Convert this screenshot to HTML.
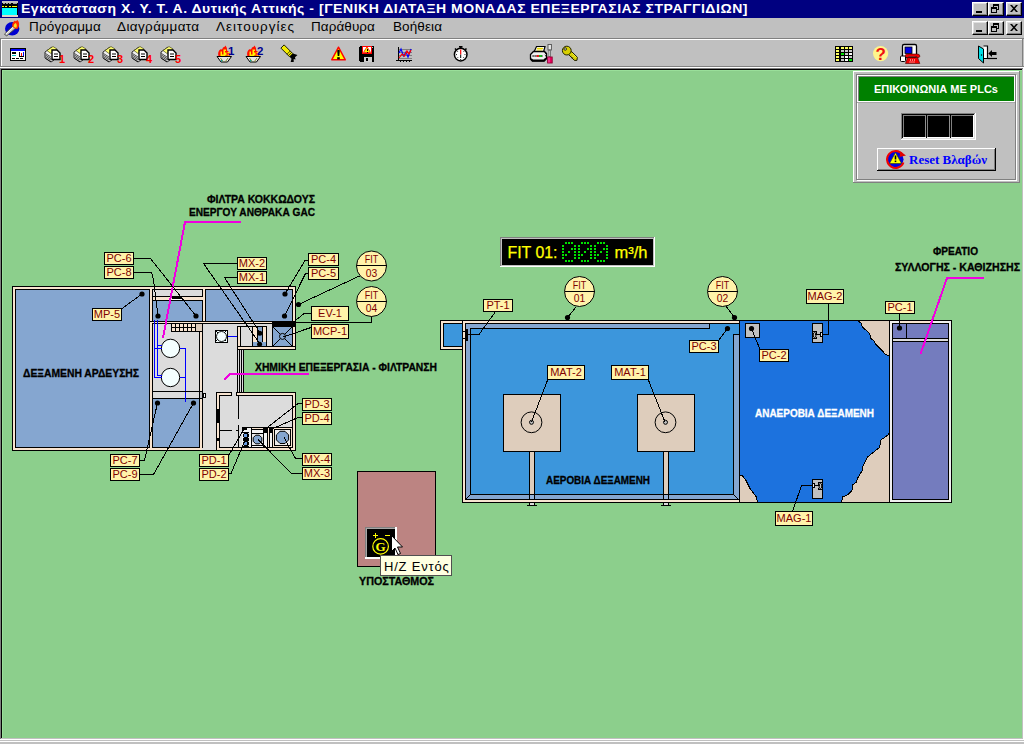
<!DOCTYPE html>
<html lang="el"><head><meta charset="utf-8"><title>Εγκατάσταση Χ. Υ. Τ. Α. Δυτικής Αττικής</title>
<style>
html,body{margin:0;padding:0}
body{width:1024px;height:744px;overflow:hidden;background:#C0C0C0;position:relative;font-family:"Liberation Sans",sans-serif;font-size:13px;color:#000}
.abs{position:absolute}
#title{left:0;top:0;width:1024px;height:18px;background:#000080}
#title .t{left:21px;top:1px;color:#fff;font-weight:bold;font-size:13px;line-height:16px;white-space:nowrap;letter-spacing:0.5px;transform:scaleX(1.076);transform-origin:0 0}
.menu{top:18px;font-size:13.5px;line-height:18px;white-space:nowrap;letter-spacing:0.45px}
.wb{width:16px;height:14px;background:#C0C0C0;box-sizing:border-box;border:1px solid;border-color:#fff #000 #000 #fff;box-shadow:inset -1px -1px 0 #808080,inset 1px 1px 0 #dfdfdf}
svg{position:absolute;left:0;top:0}
svg text{font-family:"Liberation Sans",sans-serif}
#tip{left:380px;top:555px;width:70px;height:19px;background:#FFFFE1;border:1px solid #505050;font-size:13px;line-height:21px;white-space:nowrap}
</style></head><body>
<div id="title" class="abs"><div class="t abs">Εγκατάσταση Χ. Υ. Τ. Α. Δυτικής Αττικής - [ΓΕΝΙΚΗ ΔΙΑΤΑΞΗ ΜΟΝΑΔΑΣ ΕΠΕΞΕΡΓΑΣΙΑΣ ΣΤΡΑΓΓΙΔΙΩΝ]</div></div>
<div class="abs wb" style="left:972px;top:2px"></div><div class="abs wb" style="left:988px;top:2px"></div><div class="abs wb" style="left:1006px;top:2px"></div><div class="abs wb" style="left:972px;top:21px"></div><div class="abs wb" style="left:988px;top:21px"></div><div class="abs wb" style="left:1006px;top:21px"></div>
<div class="abs menu" style="left:29px;letter-spacing:0.16px">Πρόγραμμα</div><div class="abs menu" style="left:117px;letter-spacing:0.38px">Διαγράμματα</div><div class="abs menu" style="left:216px;letter-spacing:1.0px">Λειτουργίες</div><div class="abs menu" style="left:311px;letter-spacing:0.07px">Παράθυρα</div><div class="abs menu" style="left:393px;letter-spacing:0.11px">Βοήθεια</div>
<div class="abs" style="left:0;top:38px;width:1024px;height:1px;background:#808080"></div><div class="abs" style="left:1px;top:39px;width:1022px;height:1px;background:#fff"></div><div class="abs" style="left:1px;top:39px;width:1px;height:27px;background:#fff"></div><div class="abs" style="left:0;top:38px;width:1px;height:29px;background:#808080"></div><div class="abs" style="left:0;top:66px;width:1024px;height:1px;background:#808080"></div><div class="abs" style="left:0;top:67px;width:1024px;height:1px;background:#fff"></div><div class="abs" style="left:1022px;top:39px;width:1px;height:28px;background:#808080"></div><div class="abs" style="left:0;top:68px;width:1024px;height:671px;background:#808080"></div><div class="abs" style="left:1px;top:69px;width:1022px;height:670px;background:#000"></div><div class="abs" style="left:2px;top:70px;width:1020px;height:668px;background:#8CCF8C"></div><div class="abs" style="left:2px;top:70px;width:1020px;height:1px;background:#9ADF9A"></div><div class="abs" style="left:2px;top:70px;width:1px;height:668px;background:#9ADF9A"></div><div class="abs" style="left:1022px;top:69px;width:1px;height:670px;background:#C0C0C0"></div><div class="abs" style="left:1023px;top:68px;width:1px;height:672px;background:#fff"></div><div class="abs" style="left:1px;top:738px;width:1022px;height:1px;background:#C0C0C0"></div><div class="abs" style="left:0;top:739px;width:1024px;height:1px;background:#fff"></div><div class="abs" style="left:0;top:740px;width:1024px;height:1px;background:#C0C0C0"></div><div class="abs" style="left:0;top:741px;width:1024px;height:1px;background:#fff"></div><div class="abs" style="left:0;top:742px;width:1024px;height:2px;background:#C0C0C0"></div>
<svg width="1024" height="744" viewBox="0 0 1024 744" shape-rendering="crispEdges">
<g id="ticon"><rect x="2" y="1" width="16" height="16" fill="#000" /><rect x="2" y="1" width="16" height="2" fill="#C0C0C0" /><rect x="3" y="3" width="2" height="1" fill="#A0A0A0" /><rect x="6" y="3" width="2" height="1" fill="#A0A0A0" /><rect x="9" y="3" width="2" height="1" fill="#A0A0A0" /><rect x="13" y="3" width="2" height="1" fill="#A0A0A0" /><rect x="15" y="3" width="2" height="1" fill="#A0A0A0" /><rect x="2" y="6" width="2" height="1" fill="#FFFF00" /><rect x="5" y="6" width="2" height="1" fill="#FFFF00" /><rect x="9" y="6" width="2" height="1" fill="#FFFF00" /><rect x="12" y="6" width="5" height="1" fill="#FFFF00" /><rect x="2" y="8" width="15" height="7" fill="#00FFFF" /><rect x="2" y="15" width="16" height="2" fill="#E0D4C8" /></g>
<g id="micon" shape-rendering="auto"><ellipse cx="12.2" cy="28.8" rx="7.2" ry="6.8" fill="#0000D0"/><path d="M4.5 34 L13.5 25.5 L16 28 L6.5 36 Z" fill="#C8C8C8" stroke="#404040" stroke-width="0.9"/><path d="M6 34 L14 26.5" stroke="#fff" stroke-width="0.9"/><path d="M12.3 26.5 Q11.5 22.5 15 20.5 Q15.5 22 17.5 20 Q20.5 23.5 18 28.5 Q15 30 12.3 26.5 Z" fill="#FF2800"/><path d="M13.5 26.5 Q13.5 24 15.5 23 Q17.5 24.5 16.5 27.5 Q14.5 28 13.5 26.5 Z" fill="#FFE020"/></g>
<rect x="976" y="11" width="6" height="2" fill="#000" /><rect x="993.5" y="4.5" width="5" height="5" fill="none" stroke="#000" /><rect x="993" y="4" width="6" height="2" fill="#000" /><rect x="991.5" y="7.5" width="5" height="5" fill="#C0C0C0" stroke="#000" /><rect x="991" y="7" width="6" height="2" fill="#000" /><path d="M1010 5 h2 l6 7 h-2 Z M1016 5 h2 l-6 7 h-2 Z" fill="#000" shape-rendering="auto"/><rect x="976" y="30" width="6" height="2" fill="#000" /><rect x="993.5" y="23.5" width="5" height="5" fill="none" stroke="#000" /><rect x="993" y="23" width="6" height="2" fill="#000" /><rect x="991.5" y="26.5" width="5" height="5" fill="#C0C0C0" stroke="#000" /><rect x="991" y="26" width="6" height="2" fill="#000" /><path d="M1010 24 h2 l6 7 h-2 Z M1016 24 h2 l-6 7 h-2 Z" fill="#000" shape-rendering="auto"/>
<g><rect x="10.5" y="48.5" width="15" height="12" fill="#fff" stroke="#000" /><rect x="11" y="49" width="14" height="2" fill="#0000FF" /><rect x="12" y="52" width="4" height="2" fill="#000" /><rect x="12" y="55" width="4" height="1" fill="#00C0C0" /><rect x="19" y="52" width="1" height="4" fill="#000" /><rect x="21" y="53" width="1" height="3" fill="#FF0000" /><rect x="23" y="52" width="1" height="4" fill="#0000FF" /><rect x="19" y="56" width="5" height="1" fill="#000" /><rect x="12" y="58" width="3" height="1" fill="#000" /><rect x="16" y="58" width="3" height="1" fill="#000" /><rect x="20" y="58" width="3" height="1" fill="#000" /></g>
<g shape-rendering="auto"><path d="M45 52 L52 47 L54 49 L54 60 L51 62 L45 58 Z" fill="#f0f0f0" stroke="#000" stroke-width="0.8"/><path d="M45.5 53.5 L51 57.0" stroke="#000" stroke-width="0.7"/><path d="M45.5 55.1 L51 58.6" stroke="#000" stroke-width="0.7"/><path d="M45.5 56.7 L51 60.2" stroke="#000" stroke-width="0.7"/><path d="M45.5 58.3 L51 61.8" stroke="#000" stroke-width="0.7"/><path d="M47 50.5 L53 46.5 L57 49 L51 53.5 Z" fill="#FFFF70" stroke="#303000" stroke-width="0.6"/><path d="M52 50 L57 50 L60 53 L60 59.5 L52 59.5 Z" fill="#fff" stroke="#000" stroke-width="1.4"/><path d="M54 54 h4 M54 56.5 h4" stroke="#000" stroke-width="1"/><text x="59" y="63" font-size="11" font-weight="bold" fill="#FF0000">1</text></g><g shape-rendering="auto"><path d="M74 52 L81 47 L83 49 L83 60 L80 62 L74 58 Z" fill="#f0f0f0" stroke="#000" stroke-width="0.8"/><path d="M74.5 53.5 L80 57.0" stroke="#000" stroke-width="0.7"/><path d="M74.5 55.1 L80 58.6" stroke="#000" stroke-width="0.7"/><path d="M74.5 56.7 L80 60.2" stroke="#000" stroke-width="0.7"/><path d="M74.5 58.3 L80 61.8" stroke="#000" stroke-width="0.7"/><path d="M76 50.5 L82 46.5 L86 49 L80 53.5 Z" fill="#FFFF70" stroke="#303000" stroke-width="0.6"/><path d="M81 50 L86 50 L89 53 L89 59.5 L81 59.5 Z" fill="#fff" stroke="#000" stroke-width="1.4"/><path d="M83 54 h4 M83 56.5 h4" stroke="#000" stroke-width="1"/><text x="88" y="63" font-size="11" font-weight="bold" fill="#FF0000">2</text></g><g shape-rendering="auto"><path d="M103 52 L110 47 L112 49 L112 60 L109 62 L103 58 Z" fill="#f0f0f0" stroke="#000" stroke-width="0.8"/><path d="M103.5 53.5 L109 57.0" stroke="#000" stroke-width="0.7"/><path d="M103.5 55.1 L109 58.6" stroke="#000" stroke-width="0.7"/><path d="M103.5 56.7 L109 60.2" stroke="#000" stroke-width="0.7"/><path d="M103.5 58.3 L109 61.8" stroke="#000" stroke-width="0.7"/><path d="M105 50.5 L111 46.5 L115 49 L109 53.5 Z" fill="#FFFF70" stroke="#303000" stroke-width="0.6"/><path d="M110 50 L115 50 L118 53 L118 59.5 L110 59.5 Z" fill="#fff" stroke="#000" stroke-width="1.4"/><path d="M112 54 h4 M112 56.5 h4" stroke="#000" stroke-width="1"/><text x="117" y="63" font-size="11" font-weight="bold" fill="#FF0000">3</text></g><g shape-rendering="auto"><path d="M132 52 L139 47 L141 49 L141 60 L138 62 L132 58 Z" fill="#f0f0f0" stroke="#000" stroke-width="0.8"/><path d="M132.5 53.5 L138 57.0" stroke="#000" stroke-width="0.7"/><path d="M132.5 55.1 L138 58.6" stroke="#000" stroke-width="0.7"/><path d="M132.5 56.7 L138 60.2" stroke="#000" stroke-width="0.7"/><path d="M132.5 58.3 L138 61.8" stroke="#000" stroke-width="0.7"/><path d="M134 50.5 L140 46.5 L144 49 L138 53.5 Z" fill="#FFFF70" stroke="#303000" stroke-width="0.6"/><path d="M139 50 L144 50 L147 53 L147 59.5 L139 59.5 Z" fill="#fff" stroke="#000" stroke-width="1.4"/><path d="M141 54 h4 M141 56.5 h4" stroke="#000" stroke-width="1"/><text x="146" y="63" font-size="11" font-weight="bold" fill="#FF0000">4</text></g><g shape-rendering="auto"><path d="M161 52 L168 47 L170 49 L170 60 L167 62 L161 58 Z" fill="#f0f0f0" stroke="#000" stroke-width="0.8"/><path d="M161.5 53.5 L167 57.0" stroke="#000" stroke-width="0.7"/><path d="M161.5 55.1 L167 58.6" stroke="#000" stroke-width="0.7"/><path d="M161.5 56.7 L167 60.2" stroke="#000" stroke-width="0.7"/><path d="M161.5 58.3 L167 61.8" stroke="#000" stroke-width="0.7"/><path d="M163 50.5 L169 46.5 L173 49 L167 53.5 Z" fill="#FFFF70" stroke="#303000" stroke-width="0.6"/><path d="M168 50 L173 50 L176 53 L176 59.5 L168 59.5 Z" fill="#fff" stroke="#000" stroke-width="1.4"/><path d="M170 54 h4 M170 56.5 h4" stroke="#000" stroke-width="1"/><text x="175" y="63" font-size="11" font-weight="bold" fill="#FF0000">5</text></g>
<g shape-rendering="auto"><path d="M218.5 56.5 Q217 51 221 49 Q222 50.5 223 47.5 Q225 47 225.5 45.5 Q227.5 48 227 50.5 Q230.5 52 230 56.5 Z" fill="#FF1000"/><path d="M220.5 56 V51.5 H222 V54.5 H223.5 V49.5 H226 V51 H225 V52.5 H226.5 V55.5 H225 V56 Z M227.5 52 H229.5 V53.2 H227.5 Z M227.5 54.5 H229.5 V55.7 H227.5 Z" fill="#FFF000"/><path d="M217 56.5 L231.5 56.5 L227.5 62 L221 62 Z" fill="#E8E8E8" stroke="#000" stroke-width="1"/><path d="M220.5 58 L223 61.5 M228 58 L225.5 61.5" stroke="#909020" stroke-width="1" fill="none"/><path d="M221.5 60 L222 61.5" stroke="#00A0A0" stroke-width="1.2" fill="none"/><text x="228" y="54.5" font-size="11.5" font-weight="bold" fill="#000090">1</text></g><g shape-rendering="auto"><path d="M247.5 56.5 Q246 51 250 49 Q251 50.5 252 47.5 Q254 47 254.5 45.5 Q256.5 48 256 50.5 Q259.5 52 259 56.5 Z" fill="#FF1000"/><path d="M249.5 56 V51.5 H251 V54.5 H252.5 V49.5 H255 V51 H254 V52.5 H255.5 V55.5 H254 V56 Z M256.5 52 H258.5 V53.2 H256.5 Z M256.5 54.5 H258.5 V55.7 H256.5 Z" fill="#FFF000"/><path d="M246 56.5 L260.5 56.5 L256.5 62 L250 62 Z" fill="#E8E8E8" stroke="#000" stroke-width="1"/><path d="M249.5 58 L252 61.5 M257 58 L254.5 61.5" stroke="#909020" stroke-width="1" fill="none"/><path d="M250.5 60 L251 61.5" stroke="#00A0A0" stroke-width="1.2" fill="none"/><text x="257" y="54.5" font-size="11.5" font-weight="bold" fill="#000090">2</text></g>
<g shape-rendering="auto"><path d="M284.1 44.9 L292.8 53.6 L289.6 56.8 L280.9 48.1 Z" fill="#F4EC00" stroke="#202000" stroke-width="1"/><path d="M287 54.2 L290.2 51 M288.4 55.6 L291.6 52.4" stroke="#202000" stroke-width="0.8"/><path d="M289.6 56.8 L292.8 53.6 L297.5 55 L295 57.2 L295.5 59.5 L293.7 59 L293.7 62 L290.7 62 L291.5 58.7 Z" fill="#000"/></g>
<g shape-rendering="auto"><path d="M338.5 47.2 L345.3 59.8 L331.7 59.8 Z" fill="#FFFF00" stroke="#FF0000" stroke-width="1.4" stroke-linejoin="round"/><path d="M337.2 50.5 Q338.5 49 339.8 50.5 L339.3 56 H337.7 Z" fill="#000"/><rect x="337.2" y="57.2" width="2.6" height="2.2" fill="#000"/></g>
<g><path d="M360 46 H373 L374 47 V62 H360 L359 61 V47 Z" fill="#000"/><rect x="362.5" y="46.5" width="9" height="7" fill="#fff" stroke="#FF0000" /><path d="M367 46.8 L370.6 52.6 L363.4 52.6 Z" fill="#FFFF00" stroke="#FF0000" stroke-width="0.8" shape-rendering="auto"/><rect x="366.5" y="48.5" width="1" height="2.5" fill="#000" /><rect x="366.5" y="51.5" width="1" height="1" fill="#000" /><rect x="364" y="57" width="8" height="5" fill="#D0D0D0" /><rect x="366" y="58" width="2" height="3" fill="#000" /><rect x="372" y="47" width="1" height="1" fill="#C0C0C0" /></g>
<g><rect x="398" y="49" width="14" height="1" fill="#808080" /><rect x="398" y="52" width="14" height="1" fill="#808080" /><rect x="398" y="55" width="14" height="1" fill="#808080" /><rect x="398" y="58" width="14" height="1" fill="#808080" /><rect x="398" y="47" width="1" height="14" fill="#000" /><rect x="396" y="60" width="16" height="1" fill="#000" /><rect x="400" y="61" width="1" height="1" fill="#000" /><rect x="403" y="61" width="1" height="1" fill="#000" /><rect x="406" y="61" width="1" height="1" fill="#000" /><rect x="409" y="61" width="1" height="1" fill="#000" /><polyline points="399,53 401,49 403.5,56 406,52 408,57 411,49" fill="none" stroke="#0000FF" stroke-width="1.2" shape-rendering="auto"/><polyline points="399,58 402,54 404.5,56 407,51 409,54 411,50" fill="none" stroke="#FF0000" stroke-width="1.2" shape-rendering="auto"/></g>
<g shape-rendering="auto"><rect x="459" y="46" width="3.5" height="1.6" fill="#000"/><rect x="460" y="47" width="1.5" height="2" fill="#000"/><path d="M455 48.5 l1.5 1.5 M466.5 48.5 l-1.5 1.5" stroke="#000" stroke-width="1.6"/><circle cx="460.7" cy="54.6" r="6.3" fill="#fff" stroke="#000" stroke-width="1.5"/><path d="M460.7 49.5 V54.6" stroke="#FF0000" stroke-width="1.2"/><path d="M460.7 54.6 V58" stroke="#000" stroke-width="1"/><path d="M456 54.6 h1 M464.5 54.6 h1 M460.7 59 v1 M457.3 51.2 l.7 .7 M464.1 51.2 l-.7 .7 M457.3 58 l.7 -.7 M464.1 58 l-.7 -.7" stroke="#000" stroke-width="0.9"/></g>
<g shape-rendering="auto"><path d="M534 52 L536.5 46.5 L545 46.5 L543.5 52 Z" fill="#fff" stroke="#000" stroke-width="1.2"/><path d="M537 48.3 H543 M536.5 50 H542.5" stroke="#E8D800" stroke-width="1.2"/><path d="M530.5 54.5 L533.5 51.5 L544.5 51.5 L546.5 53.5 V58.5 L544 61 H532.5 L530.5 59 Z" fill="#F0F0F0" stroke="#000" stroke-width="1.3"/><path d="M531 59 L532.5 60.5 H544 L546 58.5" fill="none" stroke="#000" stroke-width="2"/><path d="M532.5 56 H543" stroke="#000" stroke-width="1.6" stroke-dasharray="1.2 0.8"/><path d="M539 56 H542" stroke="#00C000" stroke-width="1.6"/><path d="M536.5 56 H539" stroke="#FF0000" stroke-width="1.6"/><path d="M544.5 52.5 l1.5 1.5 M544.8 55 l1.2 1.2" stroke="#000" stroke-width="0.8"/><rect x="548" y="44.5" width="3.4" height="5.5" fill="#E8E8E8" stroke="#505050" stroke-width="0.9"/><rect x="549" y="50" width="1.4" height="7" fill="#fff" stroke="#505050" stroke-width="0.7"/><rect x="547.6" y="57" width="4.6" height="6" fill="#E8005C" stroke="#900030" stroke-width="0.9"/><path d="M549 57.5 V62.5" stroke="#FF60C0" stroke-width="1"/></g>
<g shape-rendering="auto"><path d="M568.5 54.5 L571.5 51.5 L577.3 57.2 L577 60.3 L574.5 60.5 Z" fill="#D8D000" stroke="#202000" stroke-width="1"/><circle cx="566.8" cy="50.6" r="4.4" fill="#D8D000" stroke="#202000" stroke-width="1"/><circle cx="565.2" cy="49" r="1.3" fill="#C0C0C0" stroke="#202000" stroke-width="0.8"/><path d="M571 54.5 L575.5 59 M572.3 53.3 L576.5 57.5" stroke="#F8F840" stroke-width="0.9"/><path d="M570.5 56.8 l1.2 -1.2 M572 58.3 l1.2 -1.2 M573.5 59.8 l1.2 -1.2" stroke="#202000" stroke-width="0.7"/></g>
<g><rect x="835" y="46" width="18" height="16" fill="#000" /><rect x="836" y="47" width="3" height="2" fill="#FFFF60" /><rect x="841" y="47" width="3" height="2" fill="#FFFF60" /><rect x="845" y="47" width="3" height="2" fill="#FFFF60" /><rect x="849" y="47" width="3" height="2" fill="#FFFF60" /><rect x="836" y="50" width="3" height="2" fill="#FFFF60" /><rect x="841" y="50" width="3" height="2" fill="#C8C8C8" /><rect x="845" y="50" width="3" height="2" fill="#C8C8C8" /><rect x="849" y="50" width="3" height="2" fill="#C8C8C8" /><rect x="836" y="53" width="3" height="2" fill="#FFFF60" /><rect x="841" y="53" width="3" height="2" fill="#00E000" /><rect x="845" y="53" width="3" height="2" fill="#C8C8C8" /><rect x="849" y="53" width="3" height="2" fill="#fff" /><rect x="836" y="56" width="3" height="2" fill="#FFFF60" /><rect x="841" y="56" width="3" height="2" fill="#C8C8C8" /><rect x="845" y="56" width="3" height="2" fill="#fff" /><rect x="849" y="56" width="3" height="2" fill="#C8C8C8" /><rect x="836" y="59" width="3" height="2" fill="#FFFF60" /><rect x="841" y="59" width="3" height="2" fill="#C8C8C8" /><rect x="845" y="59" width="3" height="2" fill="#fff" /><rect x="849" y="59" width="3" height="2" fill="#00E000" /></g>
<g shape-rendering="auto"><circle cx="880.6" cy="53.6" r="7.6" fill="#FFF58C"/><text x="880.8" y="60.2" font-size="17" font-weight="bold" fill="#F01010" text-anchor="middle">?</text></g>
<g shape-rendering="auto"><rect x="902.5" y="44.5" width="14" height="13" rx="1.5" fill="#fff" stroke="#000" stroke-width="1.3"/><rect x="905" y="47" width="7" height="6.5" fill="#0000E0" stroke="#000" stroke-width="0.8"/><rect x="900.5" y="56" width="5" height="5.5" rx="1" fill="#fff" stroke="#000" stroke-width="1"/><path d="M905 56 Q905 54 908 54 H917 Q920 54 920 56.5 L918 58 L916 56.5 H909 L907 58 Z" fill="#F00000" stroke="#400000" stroke-width="0.6"/><path d="M905.5 63.5 L907.5 57.5 H917.5 L919.8 63.5 Z" fill="#F00000" stroke="#400000" stroke-width="0.6"/><path d="M910 60 h5 M909.5 62 h6" stroke="#fff" stroke-width="1" stroke-dasharray="1 1"/></g>
<g shape-rendering="auto"><path d="M983.5 46 H987.5 V58.5 H983.5" fill="#fff" stroke="#000" stroke-width="1.2"/><path d="M978.5 46 L983.5 49 V63 L978.5 58.5 Z" fill="#00E0E8" stroke="#000" stroke-width="1"/><circle cx="981.5" cy="55" r="0.7" fill="#000"/><path d="M987.5 58.5 H997" stroke="#000" stroke-width="1.2"/><path d="M988.3 53.5 L992 50 V52 H996.5 V55 H992 V57 Z" fill="#000"/></g>
<g id="panel"><rect x="853" y="71" width="167" height="112" fill="#C0C0C0" /><rect x="853" y="71" width="166" height="1" fill="#fff" /><rect x="853" y="71" width="1" height="111" fill="#fff" /><rect x="1019" y="71" width="1" height="112" fill="#808080" /><rect x="853" y="182" width="167" height="1" fill="#808080" /><rect x="857.5" y="75.5" width="159" height="105" fill="none" stroke="#fff" /><rect x="856.5" y="74.5" width="159" height="105" fill="none" stroke="#808080" /><rect x="858" y="76" width="156" height="25" fill="#008000" /><rect x="858" y="76" width="156" height="1" fill="#808080" /><rect x="858" y="76" width="1" height="25" fill="#808080" /><rect x="1014" y="76" width="1" height="26" fill="#fff" /><rect x="858" y="101" width="157" height="1" fill="#fff" /><rect x="857" y="102" width="158" height="1" fill="#A8A8A8" /><text x="936" y="93" font-size="11" font-weight="bold" fill="#fff" text-anchor="middle" textLength="124" lengthAdjust="spacingAndGlyphs">ΕΠΙΚΟΙΝΩΝΙΑ ΜΕ PLCs</text><rect x="901" y="113" width="75" height="27" fill="#fff" /><rect x="901" y="113" width="74" height="26" fill="#808080" /><rect x="902" y="114" width="73" height="25" fill="#DFDFDF" /><rect x="902" y="114" width="72" height="24" fill="#000" /><rect x="903" y="115" width="23" height="23" fill="#909090" /><rect x="903" y="137" width="23" height="1" fill="#fff" /><rect x="903" y="115" width="22" height="22" fill="#808080" /><rect x="904" y="116" width="21" height="21" fill="#000" /><rect x="927" y="115" width="23" height="23" fill="#909090" /><rect x="927" y="137" width="23" height="1" fill="#fff" /><rect x="927" y="115" width="22" height="22" fill="#808080" /><rect x="928" y="116" width="21" height="21" fill="#000" /><rect x="951" y="115" width="23" height="23" fill="#fff" /><rect x="951" y="137" width="23" height="1" fill="#fff" /><rect x="951" y="115" width="22" height="22" fill="#808080" /><rect x="952" y="116" width="21" height="21" fill="#000" /><rect x="877" y="148" width="119" height="23" fill="#C0C0C0" /><rect x="877" y="148" width="118" height="1" fill="#fff" /><rect x="877" y="148" width="1" height="22" fill="#fff" /><rect x="995" y="148" width="1" height="23" fill="#000" /><rect x="877" y="170" width="119" height="1" fill="#000" /><rect x="994" y="149" width="1" height="21" fill="#808080" /><rect x="878" y="169" width="117" height="1" fill="#808080" /><g shape-rendering="auto"><circle cx="895.5" cy="159.3" r="8" fill="#0000E0"/><path d="M902.5 154.5 A8.5 8.5 0 1 0 903.5 162.5" fill="none" stroke="#F00000" stroke-width="2"/><path d="M900.5 151.5 L906 155.5 L899.5 157 Z" fill="#E00000"/><path d="M895.5 152.5 L901.5 163.5 L889.5 163.5 Z" fill="#FFFF00" stroke="#303000" stroke-width="0.6"/><rect x="894.7" y="155.5" width="1.6" height="4" fill="#000"/><rect x="894.7" y="160.5" width="1.6" height="1.6" fill="#000"/><text x="909" y="164" font-size="13" font-weight="bold" fill="#0000FF" style="font-family:'Liberation Serif',serif" textLength="78" lengthAdjust="spacingAndGlyphs">Reset Βλαβών</text></g></g>
<g id="bldg"><path d="M12.5 286.5 H295.5 V349.5 H243.5 V392.5 H295.5 V450.5 H12.5 Z" fill="#F8E4D0" stroke="#000"/><rect x="153" y="324" width="119" height="23" fill="#DCDCDC" /><rect x="153" y="347" width="84" height="45" fill="#DCDCDC" /><rect x="153" y="392" width="63" height="58" fill="#DCDCDC" /><rect x="232" y="392" width="4" height="4" fill="#DCDCDC" /><rect x="15.5" y="289.5" width="134" height="158" fill="#85A6D0" stroke="#000" /><rect x="152.5" y="289.5" width="50" height="7" fill="#DCDCDC" stroke="#000" /><rect x="172" y="297" width="10" height="2" fill="#000" /><rect x="172" y="299" width="10" height="1" fill="#fff" /><rect x="152.5" y="300.5" width="50" height="21" fill="#85A6D0" stroke="#000" /><rect x="152" y="289" width="1" height="159" fill="#000"/><rect x="205.5" y="289.5" width="87" height="32" fill="#85A6D0" stroke="#000" /><rect x="149" y="321" width="147" height="1" fill="#000"/><rect x="150" y="322" width="145" height="1" fill="#F8E4D0" /><rect x="152" y="323" width="144" height="1" fill="#000"/><rect x="200" y="324" width="2" height="124" fill="#F8E4D0" /><rect x="199" y="324" width="1" height="124" fill="#000"/><rect x="202" y="324" width="1" height="124" fill="#000"/><rect x="171" y="324" width="25" height="7" fill="#F8E4D0" /><rect x="171" y="324" width="1" height="8" fill="#000"/><rect x="175" y="324" width="1" height="8" fill="#000"/><rect x="179" y="324" width="1" height="8" fill="#000"/><rect x="183" y="324" width="1" height="8" fill="#000"/><rect x="187" y="324" width="1" height="8" fill="#000"/><rect x="191" y="324" width="1" height="8" fill="#000"/><rect x="195" y="324" width="1" height="8" fill="#000"/><rect x="171" y="327" width="25" height="1" fill="#000"/><rect x="171" y="331" width="32" height="1" fill="#000"/><rect x="196" y="324" width="6" height="7" fill="#DECDBC" /><circle cx="170.5" cy="348.4" r="9.2" fill="#F4FFFF" stroke="#000" shape-rendering="auto"/><circle cx="170.5" cy="377.5" r="9.2" fill="#F4FFFF" stroke="#000" shape-rendering="auto"/><rect x="154" y="320" width="1" height="58" fill="#0000FF"/><rect x="157" y="320" width="1" height="56" fill="#0000FF"/><rect x="157" y="345" width="5" height="1" fill="#0000FF"/><rect x="154" y="348" width="8" height="1" fill="#0000FF"/><rect x="157" y="375" width="5" height="1" fill="#0000FF"/><rect x="154" y="377" width="8" height="1" fill="#0000FF"/><rect x="180" y="348" width="6" height="1" fill="#0000FF"/><rect x="180" y="377" width="6" height="1" fill="#0000FF"/><rect x="185" y="348" width="1" height="54" fill="#0000FF"/><rect x="153" y="391" width="50" height="1" fill="#000"/><rect x="153" y="398" width="50" height="1" fill="#000"/><rect x="200" y="392" width="2" height="6" fill="#C0C0C0" /><rect x="203.5" y="393.5" width="2" height="4" fill="#fff" stroke="#000" /><rect x="153" y="399" width="46" height="48" fill="#85A6D0" /><rect x="153" y="447" width="46" height="1" fill="#000"/><rect x="153" y="448" width="49" height="2" fill="#F8E4D0" /><rect x="185" y="392" width="1" height="10" fill="#0000FF"/><rect x="215.5" y="330.5" width="12" height="12" fill="#F4FFFF" stroke="#000" /><path d="M216 331 l2 2 M226 331 l-2 2 M216 341 l2 -2 M226 341 l-2 -2" stroke="#000" stroke-width="1" shape-rendering="auto"/><circle cx="221.5" cy="336.5" r="5" fill="#F4FFFF" stroke="#000" stroke-width="0.9" shape-rendering="auto"/><rect x="228" y="336" width="9" height="1" fill="#0000FF"/><rect x="237.5" y="326.5" width="29" height="20" fill="#DCDCDC" stroke="#000" /><rect x="238" y="327" width="2" height="19" fill="#F8E4D0" /><rect x="240" y="327" width="1" height="19" fill="#000"/><rect x="252" y="327" width="1" height="19" fill="#000"/><rect x="253" y="327" width="13" height="15" fill="#F8E4D0" /><rect x="253" y="342" width="13" height="4" fill="#85A6D0" /><rect x="258" y="327" width="4" height="19" fill="#85A6D0" /><rect x="257" y="327" width="1" height="15" fill="#000"/><rect x="262" y="327" width="1" height="15" fill="#000"/><circle cx="259.8" cy="333.3" r="2.5" fill="#000" shape-rendering="auto"/><circle cx="259.6" cy="344.3" r="2.5" fill="#000" shape-rendering="auto"/><rect x="272.5" y="326.5" width="20" height="20" fill="#85A6D0" stroke="#000" /><path d="M273 327 L292 346 M292 327 L273 346" stroke="#000" stroke-width="1" shape-rendering="auto"/><circle cx="282.5" cy="336.4" r="3" fill="#85A6D0" stroke="#000" stroke-width="1" shape-rendering="auto"/><rect x="272" y="321" width="24" height="6" fill="#000" /><rect x="293" y="327" width="2" height="22" fill="#F8E4D0" /><rect x="237" y="346" width="59" height="1" fill="#000"/><rect x="237" y="347" width="58" height="2" fill="#F8E4D0" /><rect x="237" y="346" width="1" height="4" fill="#000"/><rect x="237" y="349" width="59" height="1" fill="#000"/><rect x="237" y="350" width="7" height="42" fill="#DCDCDC" /><rect x="237" y="349" width="1" height="43" fill="#000"/><rect x="239" y="349" width="1" height="43" fill="#000"/><rect x="241" y="349" width="1" height="43" fill="#000"/><rect x="243" y="349" width="1" height="43" fill="#000"/><rect x="219.5" y="395.5" width="73" height="52" fill="#DCDCDC" stroke="#000" /><rect x="232" y="392" width="4" height="4" fill="#DCDCDC" /><rect x="231" y="392" width="1" height="4" fill="#000"/><rect x="236" y="392" width="1" height="4" fill="#000"/><rect x="216" y="392" width="16" height="1" fill="#000"/><rect x="236" y="392" width="60" height="1" fill="#000"/><rect x="216" y="392" width="1" height="59" fill="#000"/><rect x="217" y="409" width="2" height="14" fill="#000" /><rect x="217" y="438" width="2" height="3" fill="#000" /><rect x="238" y="396" width="1" height="23" fill="#000"/><rect x="238" y="425" width="1" height="23" fill="#000"/><rect x="220" y="430" width="12" height="1" fill="#000"/><rect x="236" y="430" width="3" height="1" fill="#000"/><rect x="242" y="428" width="50" height="19" fill="#F4F4F4" /><rect x="242" y="427" width="51" height="1" fill="#000"/><rect x="242" y="427" width="5" height="3" fill="#000" /><rect x="242" y="430" width="1" height="2" fill="#000" /><rect x="243" y="432" width="6" height="15" fill="#000" /><rect x="244" y="434" width="3" height="3" fill="#6C9CE0" /><rect x="244" y="442" width="3" height="3" fill="#6C9CE0" /><rect x="243" y="433" width="1" height="1" fill="#D8D8D8" /><rect x="248" y="433" width="1" height="1" fill="#D8D8D8" /><rect x="243" y="437" width="1" height="1" fill="#D8D8D8" /><rect x="248" y="437" width="1" height="1" fill="#D8D8D8" /><rect x="243" y="441" width="1" height="1" fill="#D8D8D8" /><rect x="248" y="441" width="1" height="1" fill="#D8D8D8" /><rect x="243" y="445" width="1" height="1" fill="#D8D8D8" /><rect x="248" y="445" width="1" height="1" fill="#D8D8D8" /><rect x="251" y="427" width="1" height="20" fill="#000"/><rect x="263" y="427" width="1" height="20" fill="#000"/><rect x="252" y="428" width="11" height="1" fill="#F8E4D0" /><rect x="252" y="429" width="11" height="1" fill="#000"/><rect x="252" y="433" width="11" height="1" fill="#000"/><rect x="252" y="445" width="11" height="1" fill="#000"/><rect x="252" y="434" width="11" height="11" fill="#ECECEC" /><path d="M255.7 435.2 H259.3 L261.8 437.7 V441.3 L259.3 443.8 H255.7 L253.2 441.3 V437.7 Z" fill="#85A6D0" stroke="#000" stroke-width="1" shape-rendering="auto"/><rect x="263" y="427" width="5" height="6" fill="#000" /><rect x="267" y="433" width="1" height="14" fill="#000"/><rect x="268" y="428" width="1" height="19" fill="#F8E4D0" /><rect x="269" y="428" width="1" height="19" fill="#000"/><rect x="269" y="428" width="4" height="5" fill="#000" /><rect x="272" y="433" width="1" height="14" fill="#000"/><rect x="273" y="428" width="19" height="19" fill="#F8E4D0" /><rect x="274.5" y="429.5" width="16" height="16" fill="#ECECEC" stroke="#000" /><path d="M280 431.3 H285 L288.6 434.9 V439.9 L285 443.5 H280 L276.4 439.9 V434.9 Z" fill="#85A6D0" stroke="#000" stroke-width="1" shape-rendering="auto"/></g>
<text x="23" y="377" font-size="11" font-weight="bold" fill="#000" stroke="#000" stroke-width="0.3" textLength="116" lengthAdjust="spacingAndGlyphs">ΔΕΞΑΜΕΝΗ ΑΡΔΕΥΣΗΣ</text><text x="207" y="203" font-size="11" font-weight="bold" fill="#000" stroke="#000" stroke-width="0.3" textLength="108" lengthAdjust="spacingAndGlyphs">ΦΙΛΤΡΑ ΚΟΚΚΩΔΟΥΣ</text><text x="189" y="216" font-size="11" font-weight="bold" fill="#000" stroke="#000" stroke-width="0.3" textLength="126" lengthAdjust="spacingAndGlyphs">ΕΝΕΡΓΟΥ ΑΝΘΡΑΚΑ GAC</text><text x="255" y="371" font-size="11" font-weight="bold" fill="#000" stroke="#000" stroke-width="0.3" textLength="182" lengthAdjust="spacingAndGlyphs">ΧΗΜΙΚΗ ΕΠΕΞΕΡΓΑΣΙΑ - ΦΙΛΤΡΑΝΣΗ</text>
<g id="tanks"><rect x="440.5" y="320.5" width="22" height="29" fill="#F8E4D0" stroke="#000" /><rect x="443.5" y="323.5" width="19" height="23" fill="#3C96DC" stroke="#000" /><rect x="462.5" y="320.5" width="277" height="182" fill="#F8E4D0" stroke="#000" /><rect x="465.5" y="323.5" width="274" height="176" fill="#85A6D0" stroke="#000" /><rect x="471" y="329" width="262" height="165" fill="#3C96DC" /><rect x="470" y="328" width="240" height="1" fill="#000"/><rect x="470" y="328" width="1" height="167" fill="#000"/><rect x="470" y="494" width="264" height="1" fill="#000"/><rect x="710" y="324" width="29" height="5" fill="#3C96DC" /><rect x="709" y="324" width="1" height="5" fill="#000"/><rect x="733" y="329" width="6" height="5" fill="#3C96DC" /><rect x="733" y="334" width="6" height="1" fill="#000"/><rect x="733" y="334" width="1" height="161" fill="#000"/><path d="M465.5 499.5 L470.5 494.5 M738.5 499.5 L733.5 494.5" stroke="#000" stroke-width="1"/><rect x="466" y="329" width="2" height="12" fill="#000" /><rect x="463" y="331" width="3" height="1" fill="#000"/><rect x="463" y="338" width="3" height="1" fill="#000"/><rect x="529.5" y="451.5" width="5" height="43" fill="#DECDBC" stroke="#000" /><rect x="529" y="495" width="1" height="4" fill="#000"/><rect x="534" y="495" width="1" height="4" fill="#000"/><rect x="530" y="495" width="4" height="4" fill="#98B4DA" /><rect x="530" y="503" width="4" height="2" fill="#DCDCDC" /><rect x="529" y="503" width="1" height="2" fill="#000"/><rect x="534" y="503" width="1" height="2" fill="#000"/><rect x="527" y="505" width="10" height="1" fill="#000"/><rect x="503.5" y="394.5" width="57" height="57" fill="#DECDBC" stroke="#000" /><circle cx="531.5" cy="422.3" r="10.4" fill="none" stroke="#000" shape-rendering="auto"/><circle cx="531.5" cy="422.3" r="2" fill="#C0C0C0" stroke="#000" shape-rendering="auto"/><rect x="663.5" y="451.5" width="5" height="43" fill="#DECDBC" stroke="#000" /><rect x="663" y="495" width="1" height="4" fill="#000"/><rect x="668" y="495" width="1" height="4" fill="#000"/><rect x="664" y="495" width="4" height="4" fill="#98B4DA" /><rect x="664" y="503" width="4" height="2" fill="#DCDCDC" /><rect x="663" y="503" width="1" height="2" fill="#000"/><rect x="668" y="503" width="1" height="2" fill="#000"/><rect x="661" y="505" width="10" height="1" fill="#000"/><rect x="637.5" y="394.5" width="57" height="57" fill="#DECDBC" stroke="#000" /><circle cx="665.5" cy="422.3" r="10.4" fill="none" stroke="#000" shape-rendering="auto"/><circle cx="665.5" cy="422.3" r="2" fill="#C0C0C0" stroke="#000" shape-rendering="auto"/><rect x="739.5" y="320.5" width="150" height="182" fill="#1C72DE" stroke="#000" /><path d="M857.5 320.5 L861 323 L862.5 327 L869.5 333.5 L871 338.5 L874.5 341.5 L875.5 344 L883 351.5 L884.5 353.5 L889.5 356.5 L889.5 320.5 Z" fill="#DECDBC" stroke="#000" stroke-width="1"/><path d="M740 475.5 L742 475.5 L745.5 479.5 L750 488.5 L756.5 497 L757.5 502.5 L739.5 502.5 L739.5 475.5 Z" fill="#DECDBC" stroke="#000" stroke-width="1"/><path d="M841.5 502.5 L842.5 497 L848 494.5 L852 490.5 L852.5 485 L856.5 482 L857.5 478.5 L862 471 L862.5 467 L867.5 457 L879.5 447.5 L881 440 L888.5 434.5 L889.5 432.5 L889.5 502.5 Z" fill="#DECDBC" stroke="#000" stroke-width="1"/><rect x="745.5" y="323.5" width="14" height="14" fill="#C0C0C0" stroke="#000" /><rect x="812.5" y="323.5" width="10" height="19" fill="#C0C0C0" stroke="#000" /><rect x="812.5" y="479.5" width="10" height="19" fill="#C0C0C0" stroke="#000" /><path d="M813 331.5 H816.5 V333.5 M813 338.5 H816.5 V336.5" stroke="#000" fill="none"/><ellipse cx="814.6" cy="335" rx="1.4" ry="2.6" fill="#C0C0C0" stroke="#000" shape-rendering="auto"/><rect x="815" y="334" width="5" height="1" fill="#000"/><rect x="820.5" y="332.5" width="2" height="4" fill="#E8E8E8" stroke="#000" /><path d="M822 482.5 H818.5 V484.5 M822 489.5 H818.5 V487.5" stroke="#000" fill="none"/><ellipse cx="820.4" cy="486" rx="1.4" ry="2.6" fill="#C0C0C0" stroke="#000" shape-rendering="auto"/><rect x="815" y="485" width="5" height="1" fill="#000"/><rect x="812.5" y="483.5" width="2" height="4" fill="#E8E8E8" stroke="#000" /><rect x="889.5" y="320.5" width="62" height="182" fill="#F0F0F0" stroke="#000" /><rect x="900" y="321" width="32" height="2" fill="#F8E4D0" /><rect x="892.5" y="323.5" width="56" height="176" fill="#747CBE" stroke="#000" /><rect x="906" y="324" width="1" height="14" fill="#000"/><rect x="893" y="338" width="55" height="1" fill="#000"/><rect x="893" y="339" width="55" height="2" fill="#DCDCDC" /><rect x="893" y="341" width="55" height="1" fill="#000"/></g>
<text x="546" y="484" font-size="11" font-weight="bold" fill="#000" stroke="#000" stroke-width="0.3" textLength="104" lengthAdjust="spacingAndGlyphs">ΑΕΡΟΒΙΑ ΔΕΞΑΜΕΝΗ</text><text x="755" y="417" font-size="11" font-weight="bold" fill="#fff" stroke="#fff" stroke-width="0.3" textLength="119" lengthAdjust="spacingAndGlyphs">ΑΝΑΕΡΟΒΙΑ ΔΕΞΑΜΕΝΗ</text><text x="933" y="255" font-size="11" font-weight="bold" fill="#000" stroke="#000" stroke-width="0.3" textLength="45" lengthAdjust="spacingAndGlyphs">ΦΡΕΑΤΙΟ</text><text x="895" y="271" font-size="11" font-weight="bold" fill="#000" stroke="#000" stroke-width="0.3" textLength="125" lengthAdjust="spacingAndGlyphs">ΣΥΛΛΟΓΗΣ - ΚΑΘΙΖΗΣΗΣ</text>
<rect x="357.5" y="471.5" width="78" height="95" fill="#BC8482" stroke="#000" /><rect x="365" y="527" width="32" height="32" fill="#fff" /><rect x="365" y="527" width="30" height="30" fill="#808080" /><rect x="366" y="528" width="29" height="29" fill="#A8A8A8" /><rect x="367" y="529" width="28" height="28" fill="#000" /><g shape-rendering="auto"><circle cx="380.6" cy="546.4" r="7.8" fill="none" stroke="#FFFF00" stroke-width="1.2"/><text x="380.6" y="551.2" font-size="13" font-weight="bold" fill="#FFFF00" text-anchor="middle" style="font-family:'Liberation Serif',serif">G</text><path d="M373 535.5 h5 M375.5 533 v5 M385 535.5 h5" stroke="#FFFF00" stroke-width="1"/></g><text x="359" y="585" font-size="11" font-weight="bold" fill="#000" stroke="#000" stroke-width="0.3" textLength="75" lengthAdjust="spacingAndGlyphs">ΥΠΟΣΤΑΘΜΟΣ</text>
<polyline points="241,222 185,222 163,338" fill="none" stroke="#F000E0" stroke-width="2" /><polyline points="309,374 230,374 224,380" fill="none" stroke="#F000E0" stroke-width="2" /><polyline points="984,278 947,278 920.5,354" fill="none" stroke="#F000E0" stroke-width="2" />
<polyline points="134,258.5 150.5,258.5 196,316" fill="none" stroke="#000" stroke-width="1" /><polyline points="134,272.5 151.5,272.5 153.5,280 158,316" fill="none" stroke="#000" stroke-width="1" /><polyline points="122,308.5 142,294" fill="none" stroke="#000" stroke-width="1" /><polyline points="237,263.5 203.5,263.5 260,344" fill="none" stroke="#000" stroke-width="1" /><polyline points="237,277.5 224.5,277.5 260,333" fill="none" stroke="#000" stroke-width="1" /><polyline points="308,260.5 305,260.5 285,294" fill="none" stroke="#000" stroke-width="1" /><polyline points="308,273.5 305.5,273.5 284.5,316" fill="none" stroke="#000" stroke-width="1" /><polyline points="359.5,276 298.5,304.5" fill="none" stroke="#000" stroke-width="1" /><polyline points="371.5,316 371.5,322.5 295,322.5" fill="none" stroke="#000" stroke-width="1" /><polyline points="311,313.5 304,313.5 295.5,320.5" fill="none" stroke="#000" stroke-width="1" /><polyline points="311,327.5 283,337" fill="none" stroke="#000" stroke-width="1" /><polyline points="302,403.5 298,403.5 268,427" fill="none" stroke="#000" stroke-width="1" /><polyline points="302,417.5 298,417.5 273,428.5" fill="none" stroke="#000" stroke-width="1" /><polyline points="229,455 244,429" fill="none" stroke="#000" stroke-width="1" /><polyline points="229,473.5 231,473.5 244.5,441.5" fill="none" stroke="#000" stroke-width="1" /><polyline points="302,458.5 295.5,458.5 284,437.5" fill="none" stroke="#000" stroke-width="1" /><polyline points="302,473.5 291.5,473.5 258,439.5" fill="none" stroke="#000" stroke-width="1" /><polyline points="140,460.5 144.5,460.5 157.5,403" fill="none" stroke="#000" stroke-width="1" /><polyline points="140,474.5 153.5,474.5 193.5,403" fill="none" stroke="#000" stroke-width="1" /><polyline points="496,311 479,334.5 467,334.5" fill="none" stroke="#000" stroke-width="1" /><polyline points="576,307 567.5,317.5" fill="none" stroke="#000" stroke-width="1" /><polyline points="726,306 734.5,317.5" fill="none" stroke="#000" stroke-width="1" /><polyline points="548,379 531.5,422" fill="none" stroke="#000" stroke-width="1" /><polyline points="648,379 665,422" fill="none" stroke="#000" stroke-width="1" /><polyline points="718.5,340.5 727.5,328.5" fill="none" stroke="#000" stroke-width="1" /><polyline points="760,349.5 751.5,328.5" fill="none" stroke="#000" stroke-width="1" /><polyline points="828.5,303 828.5,334.5 822,334.5" fill="none" stroke="#000" stroke-width="1" /><polyline points="899.5,313 899.5,328" fill="none" stroke="#000" stroke-width="1" /><polyline points="792.5,511.5 801.5,485.5 813,485.5" fill="none" stroke="#000" stroke-width="1" />
<circle cx="142" cy="294" r="2.6" fill="#000" shape-rendering="auto"/><circle cx="158" cy="316" r="2.6" fill="#000" shape-rendering="auto"/><circle cx="196" cy="316" r="2.6" fill="#000" shape-rendering="auto"/><circle cx="157.5" cy="403" r="2.6" fill="#000" shape-rendering="auto"/><circle cx="193.5" cy="403" r="2.6" fill="#000" shape-rendering="auto"/><circle cx="285" cy="294" r="2.6" fill="#000" shape-rendering="auto"/><circle cx="284.5" cy="316" r="2.6" fill="#000" shape-rendering="auto"/><circle cx="298.5" cy="304.5" r="2.6" fill="#000" shape-rendering="auto"/><circle cx="567.5" cy="317.5" r="2.6" fill="#000" shape-rendering="auto"/><circle cx="734.5" cy="317.5" r="2.6" fill="#000" shape-rendering="auto"/><circle cx="727.5" cy="328.5" r="2.6" fill="#000" shape-rendering="auto"/><circle cx="751.5" cy="328.5" r="2.6" fill="#000" shape-rendering="auto"/><circle cx="899.5" cy="328" r="2.6" fill="#000" shape-rendering="auto"/>
<rect x="104.5" y="252.5" width="29" height="12" fill="#FFF3AA" stroke="#000" /><text x="119.0" y="262" font-size="11" fill="#800000" text-anchor="middle">PC-6</text><rect x="104.5" y="266.5" width="29" height="12" fill="#FFF3AA" stroke="#000" /><text x="119.0" y="276" font-size="11" fill="#800000" text-anchor="middle">PC-8</text><rect x="92.5" y="308.5" width="29" height="12" fill="#FFF3AA" stroke="#000" /><text x="107.0" y="318" font-size="11" fill="#800000" text-anchor="middle">MP-5</text><rect x="237.5" y="257.5" width="29" height="12" fill="#FFF3AA" stroke="#000" /><text x="252.0" y="267" font-size="11" fill="#800000" text-anchor="middle">MX-2</text><rect x="237.5" y="271.5" width="29" height="12" fill="#FFF3AA" stroke="#000" /><text x="252.0" y="281" font-size="11" fill="#800000" text-anchor="middle">MX-1</text><rect x="308.5" y="253.5" width="30" height="12" fill="#FFF3AA" stroke="#000" /><text x="323.5" y="263" font-size="11" fill="#800000" text-anchor="middle">PC-4</text><rect x="308.5" y="267.5" width="30" height="12" fill="#FFF3AA" stroke="#000" /><text x="323.5" y="277" font-size="11" fill="#800000" text-anchor="middle">PC-5</text><rect x="311.5" y="306.5" width="37" height="14" fill="#FFF3AA" stroke="#000" /><text x="330.0" y="317" font-size="11" fill="#800000" text-anchor="middle">EV-1</text><rect x="311.5" y="324.5" width="37" height="14" fill="#FFF3AA" stroke="#000" /><text x="330.0" y="335" font-size="11" fill="#800000" text-anchor="middle">MCP-1</text><rect x="302.5" y="398.5" width="29" height="12" fill="#FFF3AA" stroke="#000" /><text x="317.0" y="408" font-size="11" fill="#800000" text-anchor="middle">PD-3</text><rect x="302.5" y="412.5" width="29" height="12" fill="#FFF3AA" stroke="#000" /><text x="317.0" y="422" font-size="11" fill="#800000" text-anchor="middle">PD-4</text><rect x="199.5" y="454.5" width="29" height="12" fill="#FFF3AA" stroke="#000" /><text x="214.0" y="464" font-size="11" fill="#800000" text-anchor="middle">PD-1</text><rect x="199.5" y="468.5" width="29" height="12" fill="#FFF3AA" stroke="#000" /><text x="214.0" y="478" font-size="11" fill="#800000" text-anchor="middle">PD-2</text><rect x="302.5" y="453.5" width="29" height="12" fill="#FFF3AA" stroke="#000" /><text x="317.0" y="463" font-size="11" fill="#800000" text-anchor="middle">MX-4</text><rect x="302.5" y="467.5" width="29" height="12" fill="#FFF3AA" stroke="#000" /><text x="317.0" y="477" font-size="11" fill="#800000" text-anchor="middle">MX-3</text><rect x="110.5" y="454.5" width="29" height="12" fill="#FFF3AA" stroke="#000" /><text x="125.0" y="464" font-size="11" fill="#800000" text-anchor="middle">PC-7</text><rect x="110.5" y="468.5" width="29" height="12" fill="#FFF3AA" stroke="#000" /><text x="125.0" y="478" font-size="11" fill="#800000" text-anchor="middle">PC-9</text><rect x="483.5" y="299.5" width="29" height="12" fill="#FFF3AA" stroke="#000" /><text x="498.0" y="309" font-size="11" fill="#800000" text-anchor="middle">PT-1</text><rect x="547.5" y="365.5" width="37" height="14" fill="#FFF3AA" stroke="#000" /><text x="566.0" y="376" font-size="11" fill="#800000" text-anchor="middle">MAT-2</text><rect x="611.5" y="365.5" width="37" height="14" fill="#FFF3AA" stroke="#000" /><text x="630.0" y="376" font-size="11" fill="#800000" text-anchor="middle">MAT-1</text><rect x="689.5" y="340.5" width="29" height="12" fill="#FFF3AA" stroke="#000" /><text x="704.0" y="350" font-size="11" fill="#800000" text-anchor="middle">PC-3</text><rect x="759.5" y="349.5" width="29" height="12" fill="#FFF3AA" stroke="#000" /><text x="774.0" y="359" font-size="11" fill="#800000" text-anchor="middle">PC-2</text><rect x="806.5" y="289.5" width="37" height="14" fill="#FFF3AA" stroke="#000" /><text x="825.0" y="300" font-size="11" fill="#800000" text-anchor="middle">MAG-2</text><rect x="885.5" y="301.5" width="29" height="12" fill="#FFF3AA" stroke="#000" /><text x="900.0" y="311" font-size="11" fill="#800000" text-anchor="middle">PC-1</text><rect x="775.5" y="511.5" width="37" height="14" fill="#FFF3AA" stroke="#000" /><text x="794.0" y="522" font-size="11" fill="#800000" text-anchor="middle">MAG-1</text>
<circle cx="371.5" cy="266" r="15" fill="#FFF3AA" stroke="#000" shape-rendering="auto"/><rect x="356.5" y="265" width="30.0" height="1" fill="#000"/><text x="371.5" y="263.4" font-size="11" fill="#800000" text-anchor="middle" textLength="13.5" lengthAdjust="spacingAndGlyphs">FIT</text><text x="371.5" y="276.5" font-size="11" fill="#800000" text-anchor="middle" textLength="11.5" lengthAdjust="spacingAndGlyphs">03</text><circle cx="371.5" cy="301.5" r="15" fill="#FFF3AA" stroke="#000" shape-rendering="auto"/><rect x="356.5" y="301" width="30.0" height="1" fill="#000"/><text x="371.5" y="298.9" font-size="11" fill="#800000" text-anchor="middle" textLength="13.5" lengthAdjust="spacingAndGlyphs">FIT</text><text x="371.5" y="312.0" font-size="11" fill="#800000" text-anchor="middle" textLength="11.5" lengthAdjust="spacingAndGlyphs">04</text><circle cx="579.5" cy="291.5" r="15" fill="#FFF3AA" stroke="#000" shape-rendering="auto"/><rect x="564.5" y="291" width="30.0" height="1" fill="#000"/><text x="579.5" y="288.9" font-size="11" fill="#800000" text-anchor="middle" textLength="13.5" lengthAdjust="spacingAndGlyphs">FIT</text><text x="579.5" y="302.0" font-size="11" fill="#800000" text-anchor="middle" textLength="11.5" lengthAdjust="spacingAndGlyphs">01</text><circle cx="722.5" cy="291.5" r="15" fill="#FFF3AA" stroke="#000" shape-rendering="auto"/><rect x="707.5" y="291" width="30.0" height="1" fill="#000"/><text x="722.5" y="288.9" font-size="11" fill="#800000" text-anchor="middle" textLength="13.5" lengthAdjust="spacingAndGlyphs">FIT</text><text x="722.5" y="302.0" font-size="11" fill="#800000" text-anchor="middle" textLength="11.5" lengthAdjust="spacingAndGlyphs">02</text>
<rect x="500" y="237" width="155" height="30" fill="#fff" /><rect x="500" y="237" width="154" height="29" fill="#808080" /><rect x="501" y="238" width="153" height="28" fill="#C0C0C0" /><rect x="502" y="239" width="151" height="26" fill="#000" /><g shape-rendering="auto"><text x="507.5" y="257.7" font-size="16" fill="#FFFF00" textLength="50" lengthAdjust="spacingAndGlyphs" stroke="#FFFF00" stroke-width="0.25">FIT 01:</text><text x="614.5" y="257.7" font-size="16" fill="#FFFF00" textLength="33" lengthAdjust="spacingAndGlyphs" stroke="#FFFF00" stroke-width="0.25">m³/h</text></g><rect x="562" y="245" width="2" height="2" fill="#00E000"/><rect x="562" y="248" width="2" height="2" fill="#00E000"/><rect x="562" y="251" width="2" height="2" fill="#00E000"/><rect x="562" y="254" width="2" height="2" fill="#00E000"/><rect x="562" y="257" width="2" height="2" fill="#00E000"/><rect x="565" y="242" width="2" height="2" fill="#00E000"/><rect x="565" y="254" width="2" height="2" fill="#00E000"/><rect x="565" y="260" width="2" height="2" fill="#00E000"/><rect x="568" y="242" width="2" height="2" fill="#00E000"/><rect x="568" y="251" width="2" height="2" fill="#00E000"/><rect x="568" y="260" width="2" height="2" fill="#00E000"/><rect x="571" y="242" width="2" height="2" fill="#00E000"/><rect x="571" y="248" width="2" height="2" fill="#00E000"/><rect x="571" y="260" width="2" height="2" fill="#00E000"/><rect x="574" y="245" width="2" height="2" fill="#00E000"/><rect x="574" y="248" width="2" height="2" fill="#00E000"/><rect x="574" y="251" width="2" height="2" fill="#00E000"/><rect x="574" y="254" width="2" height="2" fill="#00E000"/><rect x="574" y="257" width="2" height="2" fill="#00E000"/><rect x="578" y="245" width="2" height="2" fill="#00E000"/><rect x="578" y="248" width="2" height="2" fill="#00E000"/><rect x="578" y="251" width="2" height="2" fill="#00E000"/><rect x="578" y="254" width="2" height="2" fill="#00E000"/><rect x="578" y="257" width="2" height="2" fill="#00E000"/><rect x="581" y="242" width="2" height="2" fill="#00E000"/><rect x="581" y="254" width="2" height="2" fill="#00E000"/><rect x="581" y="260" width="2" height="2" fill="#00E000"/><rect x="584" y="242" width="2" height="2" fill="#00E000"/><rect x="584" y="251" width="2" height="2" fill="#00E000"/><rect x="584" y="260" width="2" height="2" fill="#00E000"/><rect x="587" y="242" width="2" height="2" fill="#00E000"/><rect x="587" y="248" width="2" height="2" fill="#00E000"/><rect x="587" y="260" width="2" height="2" fill="#00E000"/><rect x="590" y="245" width="2" height="2" fill="#00E000"/><rect x="590" y="248" width="2" height="2" fill="#00E000"/><rect x="590" y="251" width="2" height="2" fill="#00E000"/><rect x="590" y="254" width="2" height="2" fill="#00E000"/><rect x="590" y="257" width="2" height="2" fill="#00E000"/><rect x="594" y="245" width="2" height="2" fill="#00E000"/><rect x="594" y="248" width="2" height="2" fill="#00E000"/><rect x="594" y="251" width="2" height="2" fill="#00E000"/><rect x="594" y="254" width="2" height="2" fill="#00E000"/><rect x="594" y="257" width="2" height="2" fill="#00E000"/><rect x="597" y="242" width="2" height="2" fill="#00E000"/><rect x="597" y="254" width="2" height="2" fill="#00E000"/><rect x="597" y="260" width="2" height="2" fill="#00E000"/><rect x="600" y="242" width="2" height="2" fill="#00E000"/><rect x="600" y="251" width="2" height="2" fill="#00E000"/><rect x="600" y="260" width="2" height="2" fill="#00E000"/><rect x="603" y="242" width="2" height="2" fill="#00E000"/><rect x="603" y="248" width="2" height="2" fill="#00E000"/><rect x="603" y="260" width="2" height="2" fill="#00E000"/><rect x="606" y="245" width="2" height="2" fill="#00E000"/><rect x="606" y="248" width="2" height="2" fill="#00E000"/><rect x="606" y="251" width="2" height="2" fill="#00E000"/><rect x="606" y="254" width="2" height="2" fill="#00E000"/><rect x="606" y="257" width="2" height="2" fill="#00E000"/>
<path d="M391.5 535.5 V551.5 L395 548 L398 554.5 L400.5 553.5 L397.5 547 H402.5 Z" fill="#fff" stroke="#000" stroke-width="1" shape-rendering="auto"/>
</svg>
<div id="tip" class="abs"><span style="margin-left:3px;letter-spacing:0.8px">Η/Ζ Εντός</span></div>
</body></html>
